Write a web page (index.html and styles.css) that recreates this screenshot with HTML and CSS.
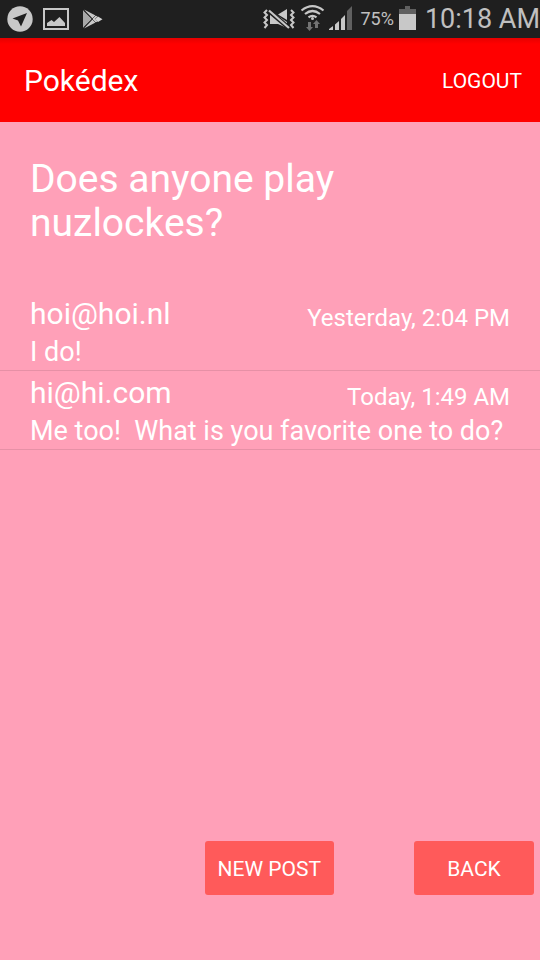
FILE: index.html
```html
<!DOCTYPE html>
<html lang="en">
<head>
<meta charset="utf-8">
<meta name="viewport" content="width=device-width, initial-scale=1">
<title>Pokédex</title>
<link rel="stylesheet" href="styles.css">
</head>
<body>
<div class="status">
  <svg class="status-left" width="104" height="38" viewBox="0 0 104 38" aria-hidden="true">
    <circle cx="20" cy="19" r="12.7" fill="#c8c8c8"/>
    <path d="M27 13 12.500 18.500 18 20.500 21 26.500Z" fill="#1f1f1f"/>
    <path d="M44 9H68V29H44Z" fill="none" stroke="#c8c8c8" stroke-width="2"/>
    <path d="M47 26V23L51.500 20 54 22 59.500 17 65 23V26Z" fill="#c8c8c8"/>
    <path d="M83 10 92 19 83 28Z" fill="#a8a8a8"/>
    <path d="M84 9.500 97.500 16.500 94 20Z" fill="#c8c8c8"/>
    <path d="M84 28.500 97.500 21.500 94 18Z" fill="#c8c8c8"/>
    <path d="M98 16.500 102.500 19.200 98 22 95 19.200Z" fill="#d4d4d4"/>
    <path d="M83.500 10.500 96 23M83.500 27.500 96 15" stroke="#1f1f1f" stroke-width="0.600"/>
  </svg>
  <svg class="status-signals" width="92" height="38" viewBox="262 0 92 38" aria-hidden="true">
    <path d="M267 10 264.500 12.500 267 15 264.500 17.500 267 20 264.500 22.500 267 25 264.500 28M291 10 293.500 12.500 291 15 293.500 17.500 291 20 293.500 22.500 291 25 293.500 28" fill="none" stroke="#c8c8c8" stroke-width="2"/>
    <path d="M270 14H275L287 22V28L278 24H270ZM278 14.500 287 9V20Z" fill="#c8c8c8"/>
    <path d="M269 11 289 28" stroke="#1f1f1f" stroke-width="4.500"/>
    <path d="M269 10.500 289 28" stroke="#c8c8c8" stroke-width="2.200"/>
    <g fill="none" stroke="#c8c8c8" stroke-width="2.200">
      <path d="M301.500 10.500Q312.500 1.800 323.500 10.500M305 14Q312.500 8 320 14M308.500 17.300Q312.500 14.300 316.500 17.300"/>
    </g>
    <circle cx="312.500" cy="18.500" r="1.500" fill="#c8c8c8"/>
    <path d="M308 22H311V27H313L309.500 31 306 27H308ZM315 28V24H313L316.500 20 320 24H318V28Z" fill="#737373"/>
    <path d="M329 30V29L333 26V30ZM335 24.500 339 21V30H335ZM341 19 345 15V30H341Z" fill="#c8c8c8"/>
    <path d="M347 11 352 6V30H347Z" fill="#606060"/>
  </svg>
  <span class="percent">75%</span>
  <svg class="battery" width="17" height="38" viewBox="0 0 17 38" aria-hidden="true">
    <path d="M6 6H11V9H17V14H0V9H6Z" fill="#606060"/>
    <path d="M0 14H17V30H0Z" fill="#c8c8c8"/>
  </svg>
  <span class="clock">10:18 AM</span>
</div>
<header class="appbar">
  <h1>Pokédex</h1>
  <button class="logout" type="button">LOGOUT</button>
</header>
<main>
  <h2>Does anyone play nuzlockes?</h2>
  <ul class="posts">
    <li class="post">
      <div class="meta"><span class="author">hoi@hoi.nl</span><time>Yesterday, 2:04 PM</time></div>
      <p>I do!</p>
    </li>
    <li class="post">
      <div class="meta"><span class="author">hi@hi.com</span><time>Today, 1:49 AM</time></div>
      <p>Me too!  What is you favorite one to do?</p>
    </li>
  </ul>
  <div class="actions">
    <button class="action" type="button">NEW POST</button>
    <button class="action" type="button">BACK</button>
  </div>
</main>
</body>
</html>
```
FILE: styles.css
```css
* {
  box-sizing: border-box;
}

body {
  margin: 0;
  min-height: 100vh;
  display: flex;
  flex-direction: column;
  background: #ffa0b8;
  color: #fff;
  font-family: Roboto, "Liberation Sans", sans-serif;
}

h1, h2, p, ul {
  margin: 0;
  padding: 0;
  font-weight: 400;
}

button {
  border: 0;
  color: inherit;
  font-family: inherit;
  font-size: 21px;
}

.status {
  display: flex;
  align-items: center;
  height: 38px;
  background: #1f1f1f;
  color: #c0c0c0;
  line-height: 38px;
  white-space: nowrap;
}

.status-signals {
  margin-left: auto;
}

.percent {
  margin: 0 5px 0 6px;
  font-size: 18px;
}

.clock {
  margin-left: 9px;
  font-size: 27px;
}

.appbar {
  display: flex;
  align-items: center;
  justify-content: space-between;
  height: 84px;
  padding: 0 18px 0 24px;
  background: linear-gradient(#e60000, #f00 6px);
}

h1 {
  font-size: 30px;
}

.logout {
  padding: 2px 0 0;
  background: none;
}

main {
  flex: 1;
  display: flex;
  flex-direction: column;
  padding: 35px 0 65px;
}

h2 {
  max-width: 390px;
  margin-bottom: 47px;
  padding: 0 30px;
  font-size: 39px;
  line-height: 44px;
}

.posts {
  list-style: none;
}

.post {
  padding: 0 30px;
  border-bottom: 1px solid #e690a6;
}

.meta {
  display: flex;
  align-items: flex-start;
  justify-content: space-between;
  height: 42px;
}

.author {
  font-size: 30px;
  line-height: 44px;
}

time {
  padding-top: 8px;
  font-size: 24px;
  line-height: 36px;
}

.post p {
  font-size: 27px;
  line-height: 36px;
  white-space: pre;
}

.actions {
  display: flex;
  justify-content: flex-end;
  gap: 80px;
  margin-top: auto;
  padding-right: 6px;
}

.action {
  min-width: 120px;
  height: 54px;
  padding: 2px 13px 0;
  border-radius: 3px;
  background: #ff5a5a;
}
```
